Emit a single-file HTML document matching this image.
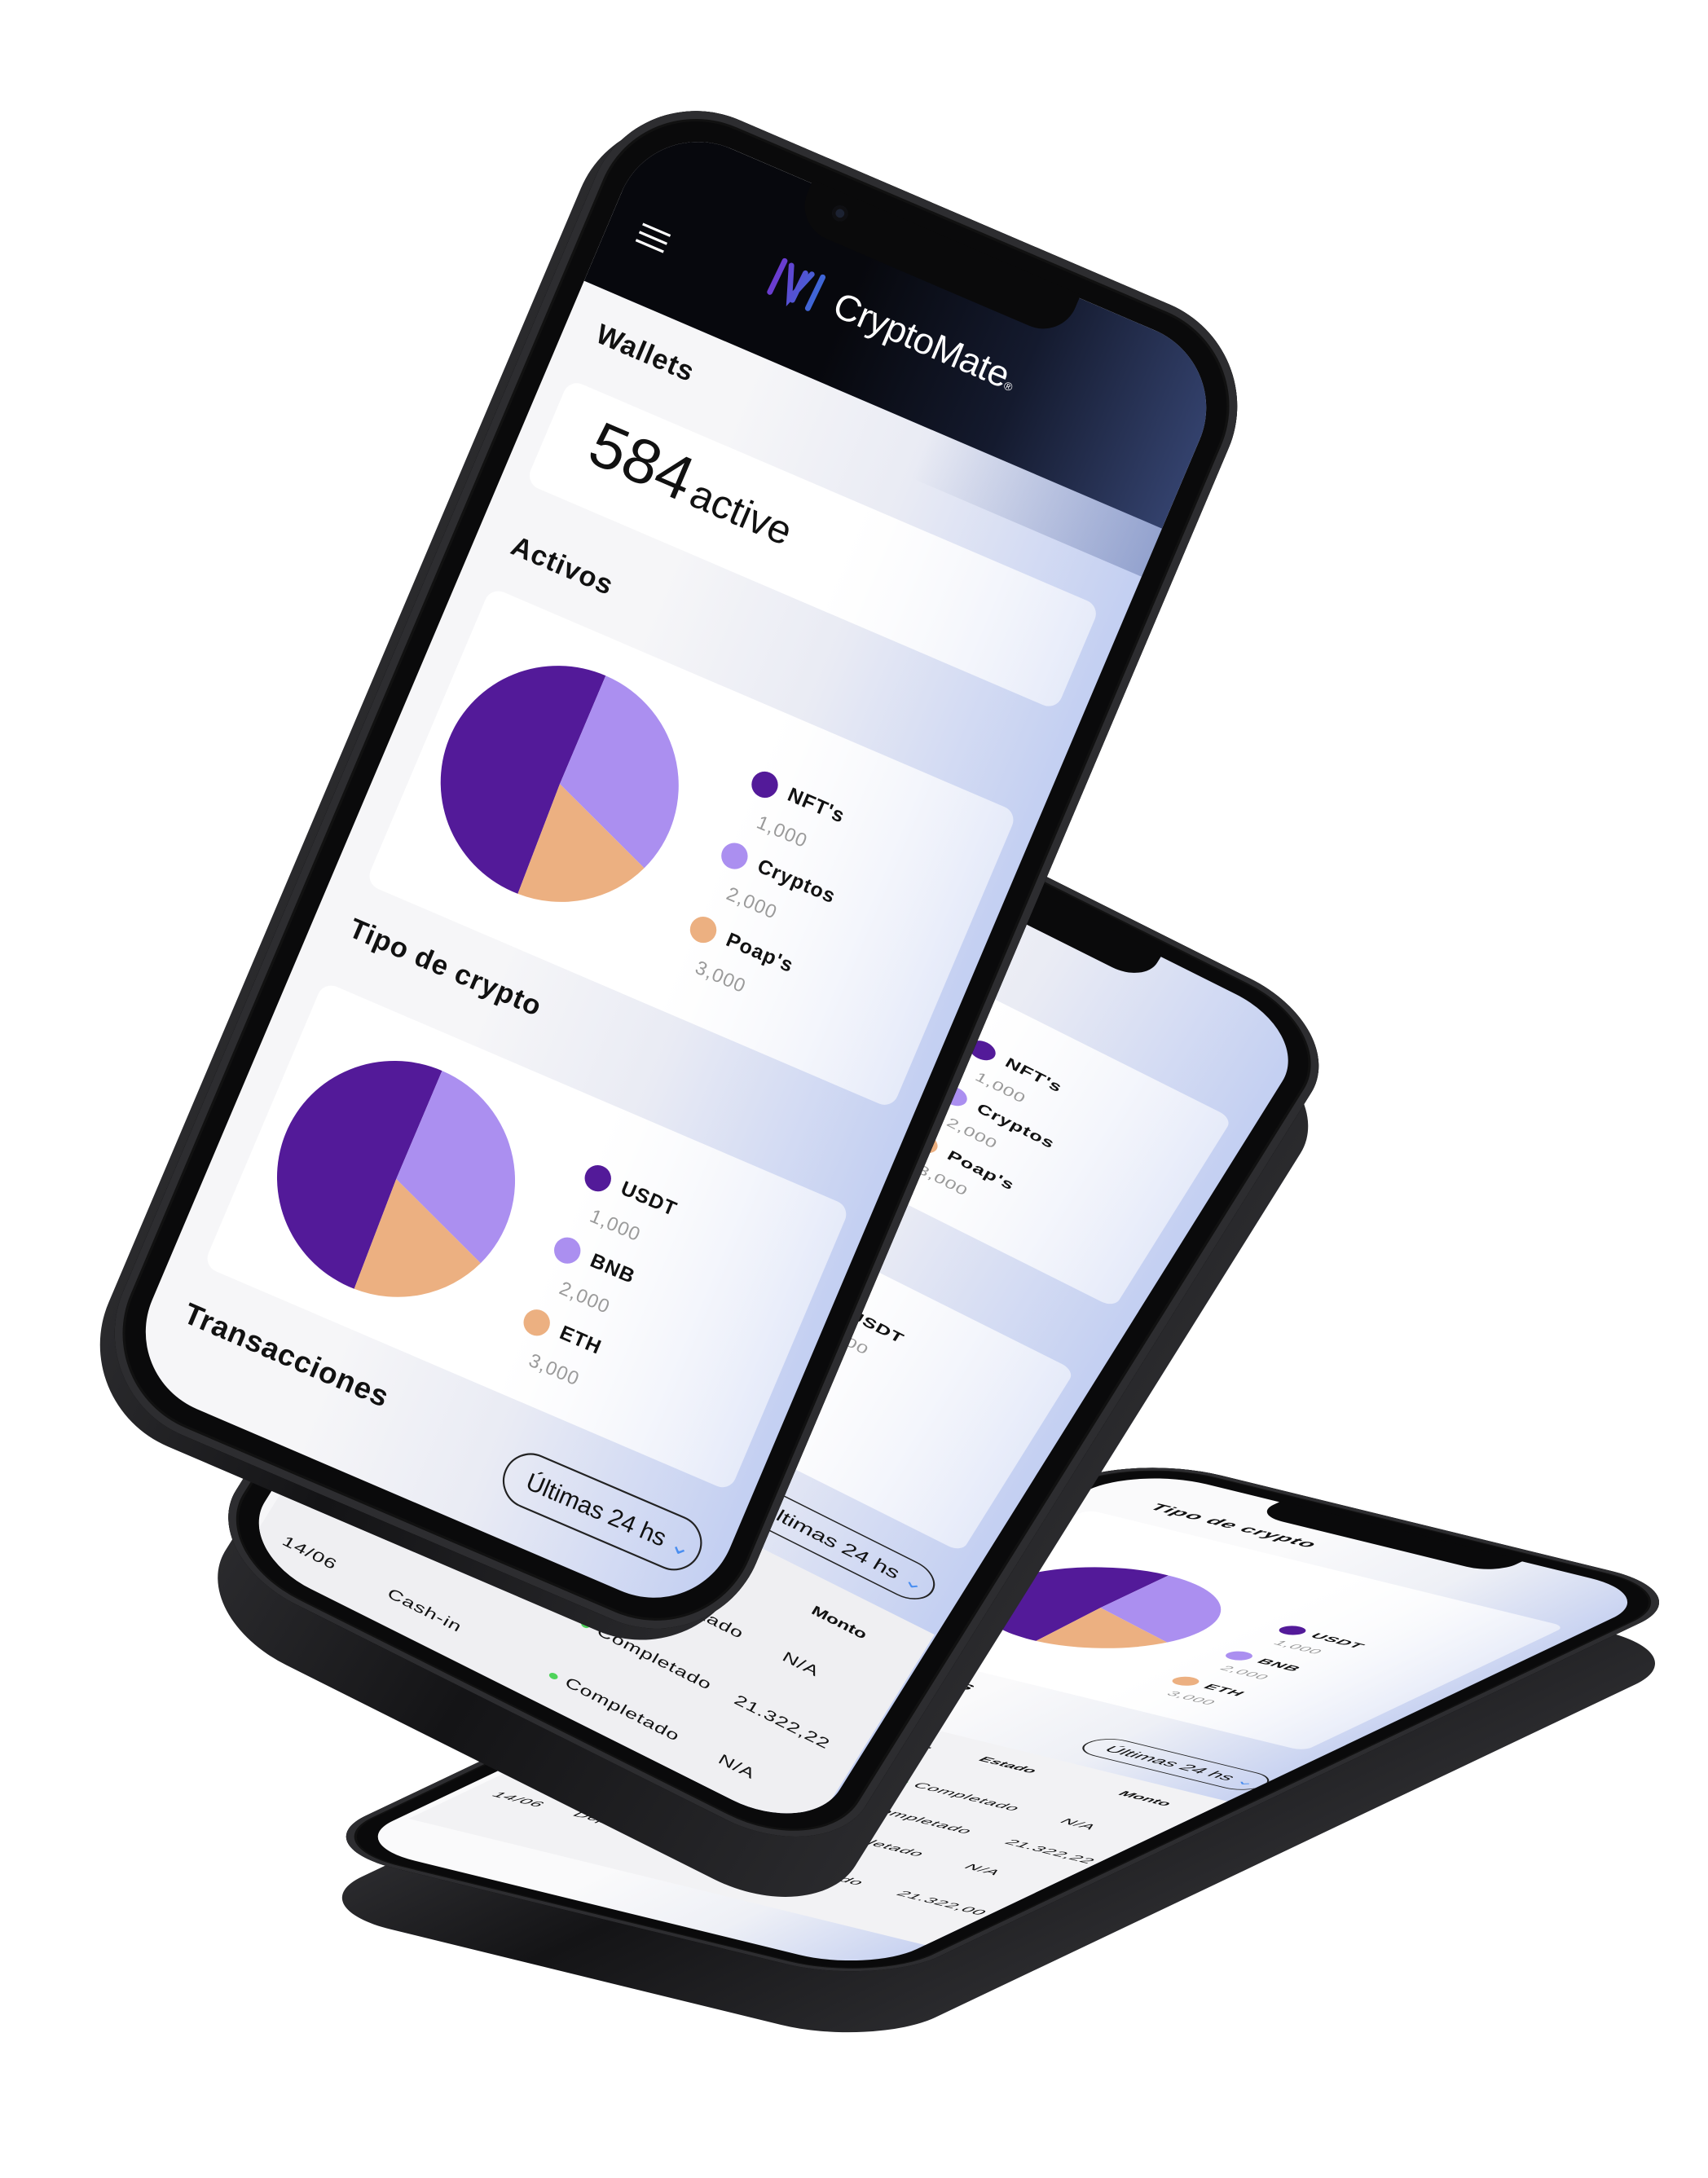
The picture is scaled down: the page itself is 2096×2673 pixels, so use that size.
<!DOCTYPE html>
<html><head><meta charset="utf-8">
<style>
html,body{margin:0;padding:0;background:#fff;}
body{width:2096px;height:2673px;overflow:hidden;position:relative;font-family:"Liberation Sans",Arial,sans-serif;}
.phone,.side{position:absolute;left:0;top:0;width:780px;height:1640px;transform-origin:0 0;border-radius:125px;}
.side{background:linear-gradient(90deg,#2a2a2d,#141416 40%,#2a2a2d);}
.phone{background:#0a0a0b;box-shadow:inset 0 0 0 9px #2d2d30,inset 0 0 0 12px #111;}
.screen{position:absolute;left:34px;top:34px;right:34px;bottom:34px;border-radius:95px;overflow:hidden;background:linear-gradient(90deg,#f6f6f8 30%,#e9ebf4 60%,#c3cff2 100%);}
.notch{position:absolute;top:30px;left:228px;width:330px;height:56px;background:#0a0a0b;border-radius:0 0 40px 40px;}
.abs{position:absolute;}
.h{position:absolute;font-weight:bold;color:#111;font-size:32px;letter-spacing:1px;white-space:nowrap;}
.card{position:absolute;background:linear-gradient(90deg,#fff 55%,rgba(255,255,255,.55));border-radius:16px;}
.dot{position:absolute;width:30px;height:30px;border-radius:50%;}
.ln{position:absolute;font-weight:bold;font-size:23px;color:#111;white-space:nowrap;letter-spacing:1px;}
.lv{position:absolute;font-size:22px;color:#9a9a9a;white-space:nowrap;letter-spacing:1px;}
.pill{position:absolute;border:2px solid #222;border-radius:40px;font-size:28px;color:#111;white-space:nowrap;box-sizing:border-box;}
.t{position:absolute;font-size:24px;color:#111;white-space:nowrap;letter-spacing:1px;}
.tb{position:absolute;font-size:22px;font-weight:bold;color:#111;white-space:nowrap;}
.g{display:inline-block;width:10px;height:10px;border-radius:50%;background:#4ed35a;margin-right:10px;vertical-align:middle;}
</style></head><body>

<!-- BOTTOM PHONE -->
<div class="side" style="transform:matrix(0.903,0.221,-0.618,0.294,1380,1858)"></div>
<div class="phone" style="transform:matrix(0.903,0.221,-0.618,0.294,1385,1783)">
 <div class="screen" style="background:linear-gradient(90deg,#fafafb 40%,#eef0f6 70%,#c9d3f1 100%)">
  <div class="h" style="left:88px;top:80px;font-size:30px">Tipo de crypto</div>
  <div class="card" style="left:36px;top:150px;width:650px;height:520px"></div>
  <svg class="abs" style="left:93px;top:272px" width="280" height="280" viewBox="-140 -140 280 280">
   <path d="M0,0 L4.7,134.9 A135,135 0 1 1 0,-135 Z" fill="#531a99"/>
   <path d="M0,0 L0,-135 A135,135 0 0 1 125.2,50.6 Z" fill="#ab8ff0"/>
   <path d="M0,0 L125.2,50.6 A135,135 0 0 1 4.7,134.9 Z" fill="#ecb081"/>
  </svg>
  <div class="dot" style="left:433px;top:330px;background:#531a99"></div><div class="ln" style="left:475px;top:330px">USDT</div><div class="lv" style="left:455px;top:375px">1,000</div>
  <div class="dot" style="left:433px;top:436px;background:#ab8ff0"></div><div class="ln" style="left:475px;top:436px">BNB</div><div class="lv" style="left:455px;top:481px">2,000</div>
  <div class="dot" style="left:433px;top:542px;background:#ecb081"></div><div class="ln" style="left:475px;top:542px">ETH</div><div class="lv" style="left:455px;top:587px">3,000</div>
  <div class="h" style="left:36px;top:700px;font-size:32px">Transacciones</div>
  <div class="pill" style="left:476px;top:761px;width:240px;height:64px;padding:14px 0 0 26px">Últimas 24 hs <span style="color:#4a8ef0">&#8964;</span></div>
  <div class="abs" style="left:10px;top:860px;width:712px;height:600px;background:#f2f2f4"></div>
  <div class="tb" style="left:40px;top:895px">Fecha</div><div class="tb" style="left:230px;top:895px">Tipo de op.</div><div class="tb" style="left:410px;top:895px">Estado</div><div class="tb" style="left:600px;top:895px">Monto</div>
  <div class="t" style="left:40px;top:1010px">14/06</div><div class="t" style="left:150px;top:1010px">Cash-in</div><div class="t" style="left:380px;top:1010px"><span class="g"></span>Completado</div><div class="t" style="left:600px;top:1010px">N/A</div>
  <div class="t" style="left:40px;top:1105px">14/06</div><div class="t" style="left:150px;top:1105px">Cash-out</div><div class="t" style="left:380px;top:1105px"><span class="g"></span>Completado</div><div class="t" style="left:590px;top:1105px">21.322,22</div>
  <div class="t" style="left:40px;top:1200px">14/06</div><div class="t" style="left:150px;top:1200px">Cash-in</div><div class="t" style="left:380px;top:1200px"><span class="g"></span>Completado</div><div class="t" style="left:600px;top:1200px">N/A</div>
  <div class="t" style="left:40px;top:1320px">14/06</div><div class="t" style="left:150px;top:1320px">Deposito</div><div class="t" style="left:380px;top:1320px"><span class="g"></span>Completado</div><div class="t" style="left:590px;top:1320px">21.322,00</div>
 </div>
 <div class="notch"></div>
</div>

<!-- MIDDLE PHONE -->
<div class="side" style="transform:matrix(0.991,0.496,-0.393,0.629,872,950)"></div>
<div class="phone" style="transform:matrix(0.991,0.496,-0.393,0.629,885,876)">
 <div class="screen">
  <div class="abs" style="left:0;top:-384px;width:712px;height:2000px">
   <div class="card" style="left:38px;top:571px;width:649px;height:370px"></div>
   <svg class="abs" style="left:57px;top:608px" width="280" height="280" viewBox="-140 -140 280 280">
    <path d="M0,0 L4.7,134.9 A135,135 0 1 1 0,-135 Z" fill="#531a99"/>
    <path d="M0,0 L0,-135 A135,135 0 0 1 125.2,50.6 Z" fill="#ab8ff0"/>
    <path d="M0,0 L125.2,50.6 A135,135 0 0 1 4.7,134.9 Z" fill="#ecb081"/>
   </svg>
   <div class="dot" style="left:396px;top:641px;background:#531a99"></div><div class="ln" style="left:440px;top:641px">NFT's</div><div class="lv" style="left:420px;top:685px">1,000</div>
   <div class="dot" style="left:396px;top:730px;background:#ab8ff0"></div><div class="ln" style="left:440px;top:730px">Cryptos</div><div class="lv" style="left:420px;top:774px">2,000</div>
   <div class="dot" style="left:396px;top:822px;background:#ecb081"></div><div class="ln" style="left:440px;top:822px">Poap's</div><div class="lv" style="left:420px;top:866px">3,000</div>
   <div class="h" style="left:42px;top:975px">Tipo de crypto</div>
   <div class="card" style="left:38px;top:1063px;width:649px;height:355px"></div>
   <div class="dot" style="left:396px;top:1132px;background:#531a99"></div><div class="ln" style="left:440px;top:1132px">USDT</div><div class="lv" style="left:420px;top:1176px">1,000</div>
   <div class="h" style="left:42px;top:1460px;font-size:34px">Transacciones</div>
   <div class="pill" style="left:443px;top:1465px;width:240px;height:64px;padding:14px 0 0 26px">Últimas 24 hs <span style="color:#4a8ef0">&#8964;</span></div>
   <div class="abs" style="left:10px;top:1560px;width:700px;height:500px;background:#efeff2"></div>
   <div class="tb" style="left:40px;top:1600px">Fecha</div><div class="tb" style="left:200px;top:1600px">Tipo de op.</div><div class="tb" style="left:400px;top:1600px">Estado</div><div class="tb" style="left:580px;top:1600px">Monto</div>
   <div class="t" style="left:40px;top:1690px">14/06</div><div class="t" style="left:170px;top:1690px">Cash-in</div><div class="t" style="left:370px;top:1690px"><span class="g"></span>Completado</div><div class="t" style="left:580px;top:1690px">N/A</div>
   <div class="t" style="left:40px;top:1790px">14/06</div><div class="t" style="left:170px;top:1790px">Cash-out</div><div class="t" style="left:370px;top:1790px"><span class="g"></span>Completado</div><div class="t" style="left:560px;top:1790px">21.322,22</div>
   <div class="t" style="left:40px;top:1890px">14/06</div><div class="t" style="left:170px;top:1890px">Cash-in</div><div class="t" style="left:370px;top:1890px"><span class="g"></span>Completado</div><div class="t" style="left:580px;top:1890px">N/A</div>
  </div>
 </div>
 <div class="notch"></div>
</div>

<!-- MAIN PHONE -->
<div class="side" style="transform:matrix(0.996,0.427,-0.417,0.984,765,108)"></div>
<div class="phone" style="transform:matrix(0.996,0.427,-0.417,0.984,783,94)">
 <div class="screen">
  <div class="abs" style="left:0;top:0;width:712px;height:206px;background:linear-gradient(90deg,#07080d 40%,#141a2e 70%,#33416c 100%)"></div>
  <div class="abs" style="left:0;top:206px;width:712px;height:60px;background:linear-gradient(90deg,rgba(0,0,0,0) 60%,rgba(60,80,140,.35) 100%)"></div>
  <div class="abs" style="left:36px;top:118px;width:34px;height:3px;background:#fff;box-shadow:0 10px 0 #fff,0 20px 0 #fff"></div>
  <svg class="abs" style="left:195px;top:86px" width="72" height="56" viewBox="0 0 80 60">
   <defs><linearGradient id="lg" x1="0" x2="1"><stop offset="0" stop-color="#6a3ccf"/><stop offset="1" stop-color="#3f66d6"/></linearGradient></defs>
   <path d="M6 8 L4 52 M16 10 L30 50 L44 10 M58 8 L56 52 M34 50 L36 12" stroke="url(#lg)" stroke-width="7" fill="none" stroke-linecap="round"/>
  </svg>
  <div class="abs" style="left:272px;top:92px;color:#fff;font-size:42px;white-space:nowrap;letter-spacing:-0.5px">CryptoMate<span style="font-size:13px">®</span></div>
  <div class="h" style="left:37px;top:236px">Wallets</div>
  <div class="card" style="left:28px;top:316px;width:654px;height:130px"></div>
  <div class="abs" style="left:80px;top:330px;font-size:72px;color:#111;white-space:nowrap">584<span style="font-size:46px;margin-left:6px">active</span></div>
  <div class="h" style="left:42px;top:498px">Activos</div>
  <div class="card" style="left:38px;top:571px;width:649px;height:370px"></div>
  <svg class="abs" style="left:57px;top:608px" width="280" height="280" viewBox="-140 -140 280 280">
   <path d="M0,0 L4.7,134.9 A135,135 0 1 1 0,-135 Z" fill="#531a99"/>
   <path d="M0,0 L0,-135 A135,135 0 0 1 125.2,50.6 Z" fill="#ab8ff0"/>
   <path d="M0,0 L125.2,50.6 A135,135 0 0 1 4.7,134.9 Z" fill="#ecb081"/>
  </svg>
  <div class="dot" style="left:396px;top:641px;background:#531a99"></div><div class="ln" style="left:440px;top:641px">NFT's</div><div class="lv" style="left:420px;top:685px">1,000</div>
  <div class="dot" style="left:396px;top:730px;background:#ab8ff0"></div><div class="ln" style="left:440px;top:730px">Cryptos</div><div class="lv" style="left:420px;top:774px">2,000</div>
  <div class="dot" style="left:396px;top:822px;background:#ecb081"></div><div class="ln" style="left:440px;top:822px">Poap's</div><div class="lv" style="left:420px;top:866px">3,000</div>
  <div class="h" style="left:42px;top:975px">Tipo de crypto</div>
  <div class="card" style="left:38px;top:1063px;width:649px;height:355px"></div>
  <svg class="abs" style="left:61px;top:1099px" width="280" height="280" viewBox="-140 -140 280 280">
   <path d="M0,0 L4.7,134.9 A135,135 0 1 1 0,-135 Z" fill="#531a99"/>
   <path d="M0,0 L0,-135 A135,135 0 0 1 125.2,50.6 Z" fill="#ab8ff0"/>
   <path d="M0,0 L125.2,50.6 A135,135 0 0 1 4.7,134.9 Z" fill="#ecb081"/>
  </svg>
  <div class="dot" style="left:396px;top:1132px;background:#531a99"></div><div class="ln" style="left:440px;top:1132px">USDT</div><div class="lv" style="left:420px;top:1176px">1,000</div>
  <div class="dot" style="left:396px;top:1222px;background:#ab8ff0"></div><div class="ln" style="left:440px;top:1222px">BNB</div><div class="lv" style="left:420px;top:1266px">2,000</div>
  <div class="dot" style="left:396px;top:1312px;background:#ecb081"></div><div class="ln" style="left:440px;top:1312px">ETH</div><div class="lv" style="left:420px;top:1356px">3,000</div>
  <div class="h" style="left:40px;top:1456px;font-size:34px">Transacciones</div>
  <div class="pill" style="left:443px;top:1465px;width:240px;height:64px;padding:14px 0 0 26px">Últimas 24 hs <span style="color:#4a8ef0">&#8964;</span></div>
 </div>
 <div class="notch"></div>
 <div class="abs" style="left:262px;top:44px;width:18px;height:18px;border-radius:50%;background:#1c2232;box-shadow:inset 0 0 0 4px #0f0f12"></div>
</div>

</body></html>
